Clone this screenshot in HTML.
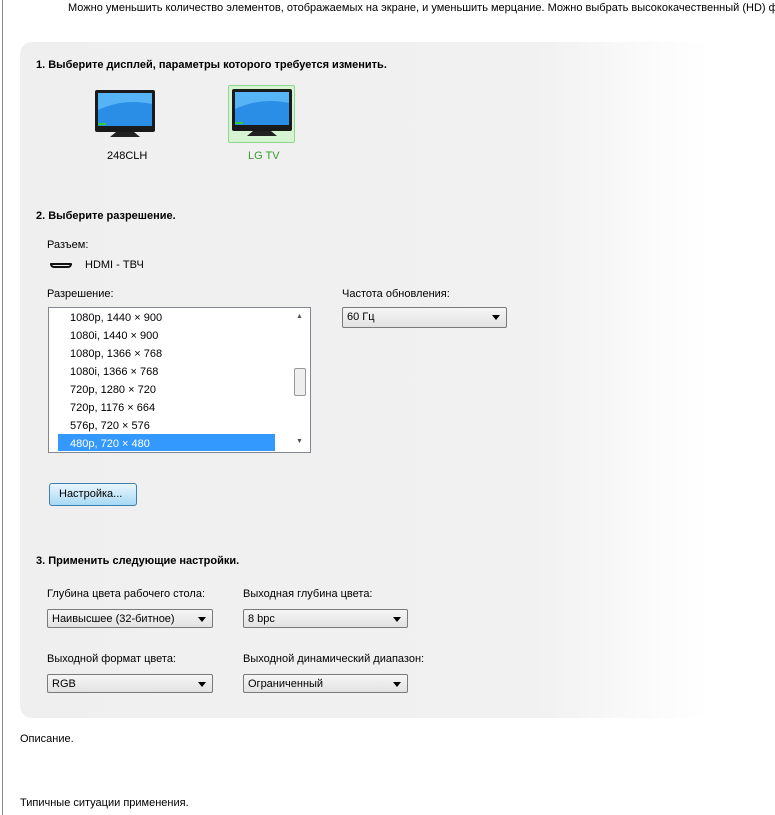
<!DOCTYPE html>
<html><head><meta charset="utf-8"><style>
body{margin:0;width:775px;height:815px;background:#fff;font-family:"Liberation Sans",sans-serif;font-size:11px;color:#000;position:relative;overflow:hidden}
.a{position:absolute;white-space:nowrap}
.vl{position:absolute;left:2px;top:0;width:1px;height:815px;background:#8a8a8a}
.panel{position:absolute;left:20px;top:42px;width:690px;height:676px;border-radius:12px;background:linear-gradient(to right,#efefef 0%,#f1f1f1 75%,#fbfbfb 92%,#fff 100%)}
h3{margin:0;font-size:11px;font-weight:bold}
.sel{position:absolute;height:19px;border:1px solid #7a7a7a;border-radius:2px;background:linear-gradient(#f6f6f6,#e2e2e2);box-sizing:border-box;padding:3px 0 0 4px}
.sel:after{content:"";position:absolute;right:6px;top:7px;border:4px solid transparent;border-top:5px solid #000;border-bottom:0}
.mon{position:absolute}
</style></head><body>
<div class="vl"></div>
<div class="a" style="left:68px;top:2px">Можно уменьшить количество элементов, отображаемых на экране, и уменьшить мерцание. Можно выбрать высококачественный (HD) ф</div>
<div class="panel"></div>
<h3 class="a" style="left:36px;top:59px">1. Выберите дисплей, параметры которого требуется изменить.</h3>
<svg class="mon" style="left:94px;top:90px" width="62" height="48" viewBox="0 0 62 48"><rect x="1" y="0" width="60" height="42" rx="2" fill="#1a1a1a"/><rect x="4" y="3" width="54" height="33" fill="#2a8ee6"/><path d="M4 20 Q30 8 58 14 L58 3 L4 3Z" fill="#56b3f5"/><rect x="4" y="33" width="8" height="2" fill="#3c3"/><path d="M22 42 L40 42 L46 47 L16 47Z" fill="#222"/></svg>
<div class="a" style="left:107px;top:150px">248CLH</div>
<div class="a" style="left:228px;top:85px;width:67px;height:58px;border:1px solid #8fd68a;background:#d6f3d2;border-radius:2px;box-sizing:border-box"></div>
<svg class="mon" style="left:231px;top:89px" width="62" height="48" viewBox="0 0 62 48"><rect x="1" y="0" width="60" height="42" rx="2" fill="#1a1a1a"/><rect x="4" y="3" width="54" height="33" fill="#2a8ee6"/><path d="M4 20 Q30 8 58 14 L58 3 L4 3Z" fill="#56b3f5"/><rect x="4" y="33" width="8" height="2" fill="#3c3"/><path d="M22 42 L40 42 L46 47 L16 47Z" fill="#222"/></svg>
<div class="a" style="left:248px;top:150px;color:#3a9a2e">LG TV</div>
<h3 class="a" style="left:36px;top:210px">2. Выберите разрешение.</h3>
<div class="a" style="left:47px;top:239px">Разъем:</div>
<div class="a" style="left:50px;top:263px;width:22px;height:5px;border:2px solid #111;border-radius:1px 1px 4px 4px;box-sizing:border-box"></div>
<div class="a" style="left:85px;top:259px">HDMI - ТВЧ</div>
<div class="a" style="left:47px;top:288px">Разрешение:</div>
<div class="a" style="left:342px;top:288px">Частота обновления:</div>
<div class="a" style="left:48px;top:307px;width:263px;height:146px;border:1px solid #828790;background:#fff;box-sizing:border-box"></div>
<div class="a" style="left:58px;top:434px;width:217px;height:17px;background:#3399ff"></div>
<div class="a" style="left:70px;top:309px;line-height:18px;font-size:11px">1080p, 1440 × 900<br>1080i, 1440 × 900<br>1080p, 1366 × 768<br>1080i, 1366 × 768<br>720p, 1280 × 720<br>720p, 1176 × 664<br>576p, 720 × 576<br><span style="color:#fff">480p, 720 × 480</span></div>
<div class="a" style="left:294px;top:368px;width:12px;height:28px;border:1px solid #999;border-radius:2px;background:#eee;box-sizing:border-box"></div>
<div class="a" style="left:296px;top:313px;font-size:7px;color:#555">▲</div>
<div class="a" style="left:296px;top:438px;font-size:7px;color:#555">▼</div>
<div class="sel" style="left:342px;top:307px;width:165px;height:21px">60 Гц</div>
<div class="a" style="left:49px;top:483px;width:88px;height:23px;border:1px solid #3c7fb1;border-radius:3px;background:linear-gradient(#eaf6fd,#a7d9f5);box-sizing:border-box;padding:4px 0 0 9px">Настройка...</div>
<h3 class="a" style="left:36px;top:555px">3. Применить следующие настройки.</h3>
<div class="a" style="left:47px;top:588px">Глубина цвета рабочего стола:</div>
<div class="a" style="left:243px;top:588px">Выходная глубина цвета:</div>
<div class="sel" style="left:47px;top:609px;width:166px">Наивысшее (32-битное)</div>
<div class="sel" style="left:243px;top:609px;width:165px">8 bpc</div>
<div class="a" style="left:47px;top:653px">Выходной формат цвета:</div>
<div class="a" style="left:243px;top:653px">Выходной динамический диапазон:</div>
<div class="sel" style="left:47px;top:674px;width:166px">RGB</div>
<div class="sel" style="left:243px;top:674px;width:165px">Ограниченный</div>
<div class="a" style="left:20px;top:733px">Описание.</div>
<div class="a" style="left:20px;top:797px">Типичные ситуации применения.</div>
</body></html>
